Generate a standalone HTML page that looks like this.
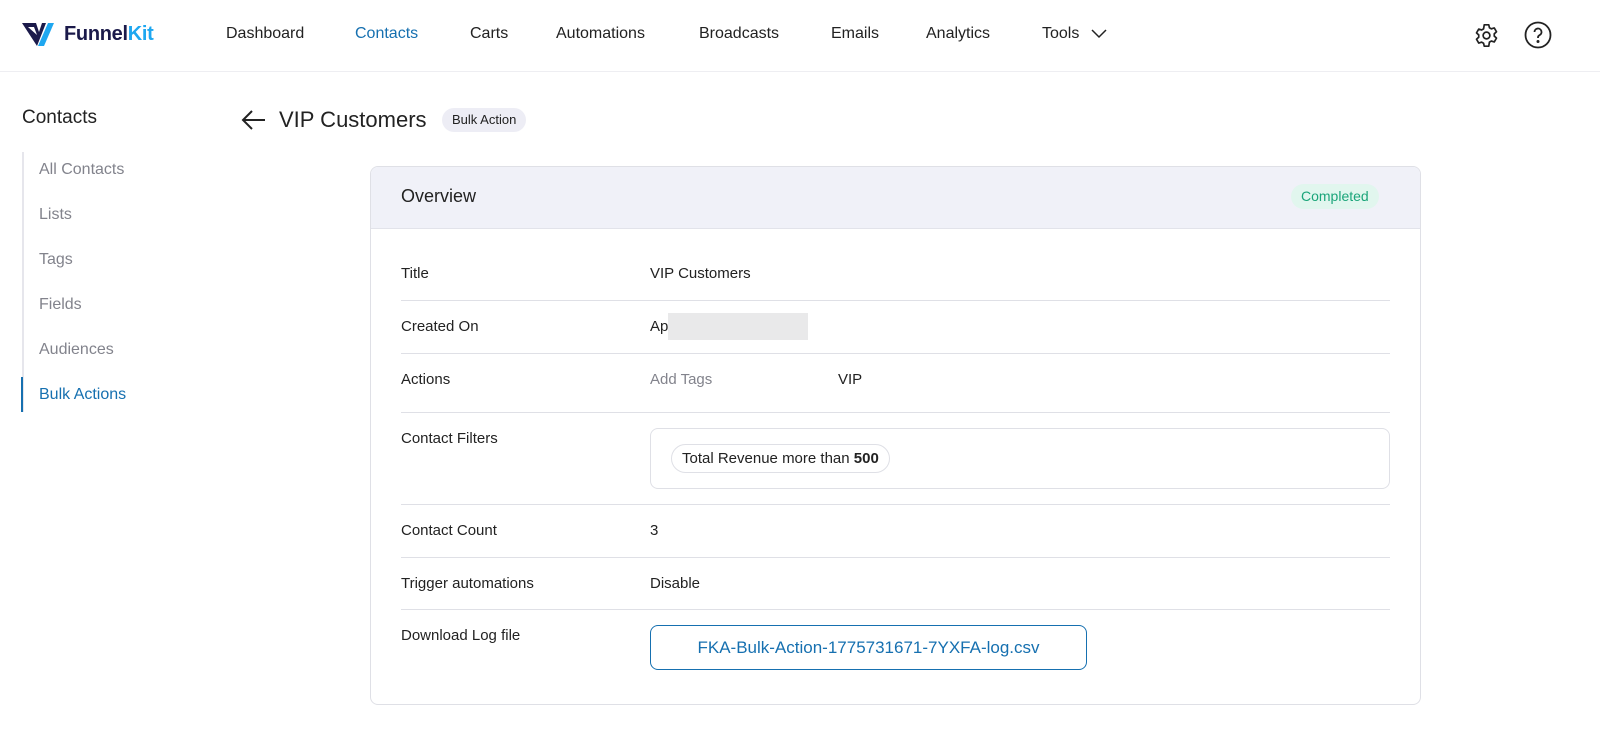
<!DOCTYPE html>
<html><head><meta charset="utf-8"><style>
*{box-sizing:border-box;margin:0;padding:0}
body{width:1600px;height:749px;background:#fff;font-family:"Liberation Sans",Arial,sans-serif;color:#1d1d1f;position:relative;overflow:hidden}
.abs{position:absolute}
.hdr{position:absolute;left:0;top:0;width:1600px;height:72px;border-bottom:1px solid #eeeef2}
.nav{position:absolute;top:25px;font-size:16px;color:#222}
.side{position:absolute;left:22px;top:152px;width:2px;height:260px;background:#e6e6ec}
.si{position:absolute;left:39px;font-size:16px;color:#82838c}
.card{position:absolute;left:370px;top:166px;width:1051px;height:539px;border:1px solid #dfe0e6;border-radius:8px;overflow:hidden}
.ch{height:62px;background:#f0f1f8;border-bottom:1px solid #e2e3ea}
.lab{position:absolute;left:401px;font-size:15px;color:#222}
.val{position:absolute;left:650px;font-size:15px;color:#222}
.sep{position:absolute;left:401px;width:989px;height:1px;background:#dfe0e6}
</style></head><body>
<div class="hdr"></div>
<svg class="abs" style="left:22px;top:21px" width="38" height="26" viewBox="0 0 38 26"><path d="M0 2H14L17 11 20 2h4L15 25Z" fill="#1b1a4a"/><path d="M6 6h6l3 8" fill="#fff"/><path d="M26 2h6L22 25h-6Z" fill="#1ea7f0"/></svg>
<div class="abs" style="left:64px;top:23px;font-size:20px;font-weight:bold;color:#1b1a4a;letter-spacing:-.3px">Funnel<span style="color:#1ea7f0">Kit</span></div>
<div class="nav" style="left:226px">Dashboard</div>
<div class="nav" style="left:355px;color:#1670b0">Contacts</div>
<div class="nav" style="left:470px">Carts</div>
<div class="nav" style="left:556px">Automations</div>
<div class="nav" style="left:699px">Broadcasts</div>
<div class="nav" style="left:831px">Emails</div>
<div class="nav" style="left:926px">Analytics</div>
<div class="nav" style="left:1042px">Tools</div>
<svg class="abs" style="left:1091px;top:29px" width="16" height="10" viewBox="0 0 16 10"><path d="M1 1l7 7 7-7" fill="none" stroke="#222" stroke-width="1.5"/></svg>
<svg class="abs" style="left:1473px;top:22px" width="27" height="27" viewBox="0 0 24 24" fill="none" stroke="#222" stroke-width="1.5"><circle cx="12" cy="12" r="3"/><path d="M10 2.5h4l.6 2.6 1.8 1 2.5-.8 2 3.4-2 1.8v2l2 1.8-2 3.4-2.5-.8-1.8 1L14 21.5h-4l-.6-2.6-1.8-1-2.5.8-2-3.4 2-1.8v-2l-2-1.8 2-3.4 2.5.8 1.8-1Z" stroke-linejoin="round"/></svg>
<svg class="abs" style="left:1524px;top:21px" width="28" height="28" viewBox="0 0 28 28" fill="none" stroke="#222" stroke-width="1.8"><circle cx="14" cy="14" r="12.5"/><path d="M10.5 11a3.5 3.5 0 1 1 5 3.2c-1 .5-1.5 1.2-1.5 2.3v.5"/><circle cx="14" cy="20.5" r=".6" fill="#222"/></svg>
<div class="abs" style="left:22px;top:107px;font-size:19px;color:#222">Contacts</div>
<div class="side"></div>
<div class="abs" style="left:21px;top:377px;width:2px;height:35px;background:#1670b0"></div>
<div class="si" style="top:161px">All Contacts</div>
<div class="si" style="top:206px">Lists</div>
<div class="si" style="top:251px">Tags</div>
<div class="si" style="top:296px">Fields</div>
<div class="si" style="top:341px">Audiences</div>
<div class="si" style="top:386px;color:#1670b0">Bulk Actions</div>
<svg class="abs" style="left:241px;top:109px" width="25" height="22" viewBox="0 0 25 22" fill="none" stroke="#222" stroke-width="2"><path d="M24 11H2M11 2 2 11l9 9"/></svg>
<div class="abs" style="left:279px;top:107px;font-size:22px;color:#222">VIP Customers</div>
<div class="abs" style="left:442px;top:108px;height:24px;padding:0 10px;line-height:24px;font-size:13px;background:#ededf5;border-radius:12px;color:#222">Bulk Action</div>
<div class="card"><div class="ch"></div></div>
<div class="abs" style="left:401px;top:186px;font-size:18px;color:#222">Overview</div>
<div class="abs" style="left:1291px;top:184px;height:25px;padding:0 10px;line-height:25px;font-size:14px;background:#e1f6ee;color:#1ba57a;border-radius:13px">Completed</div>
<div class="lab" style="top:265px">Title</div><div class="val" style="top:265px">VIP Customers</div>
<div class="sep" style="top:300px"></div>
<div class="lab" style="top:318px">Created On</div><div class="val" style="top:318px">Ap</div>
<div class="abs" style="left:668px;top:313px;width:140px;height:27px;background:#e9e9ea"></div>
<div class="sep" style="top:353px"></div>
<div class="lab" style="top:371px">Actions</div><div class="val" style="top:371px;color:#82838c">Add Tags</div><div class="val" style="top:371px;left:838px">VIP</div>
<div class="sep" style="top:412px"></div>
<div class="lab" style="top:430px">Contact Filters</div>
<div class="abs" style="left:650px;top:428px;width:740px;height:61px;border:1px solid #dfe0e6;border-radius:8px"></div>
<div class="abs" style="left:671px;top:444px;height:29px;padding:0 10px;line-height:27px;font-size:15px;border:1px solid #dfe0e6;border-radius:15px;color:#222">Total Revenue more than <b>500</b></div>
<div class="sep" style="top:504px"></div>
<div class="lab" style="top:522px">Contact Count</div><div class="val" style="top:522px">3</div>
<div class="sep" style="top:557px"></div>
<div class="lab" style="top:575px">Trigger automations</div><div class="val" style="top:575px">Disable</div>
<div class="sep" style="top:609px"></div>
<div class="lab" style="top:627px">Download Log file</div>
<div class="abs" style="left:650px;top:625px;width:437px;height:45px;border:1px solid #1670b0;border-radius:8px;line-height:43px;text-align:center;font-size:17px;color:#1670b0">FKA-Bulk-Action-1775731671-7YXFA-log.csv</div>
</body></html>
